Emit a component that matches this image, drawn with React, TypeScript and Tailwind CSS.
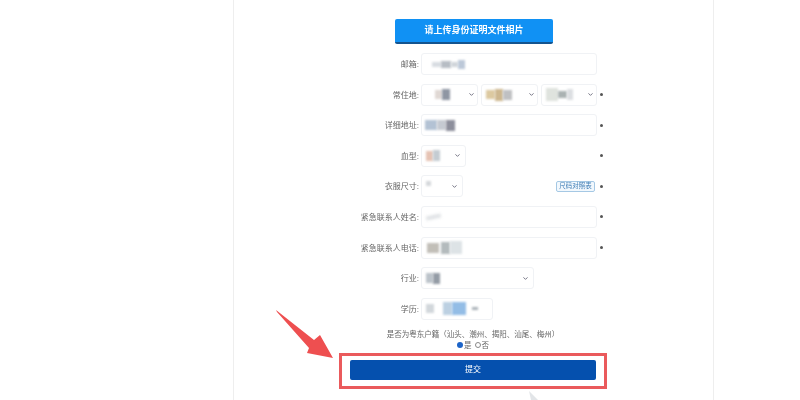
import { ReactNode } from "react";
import { ChevronDown } from "lucide-react";

function Row({
  label,
  star = true,
  children,
  extra,
}: {
  label: string;
  star?: boolean;
  children: ReactNode;
  extra?: ReactNode;
}) {
  return (
    <div className="flex h-[22px] items-center">
      <div className="w-[187px] pt-[2px] pr-[2px] text-right text-[8px] leading-none text-[#666] blur-[0.5px]">{label}:</div>
      <div className="flex w-[176px] items-center justify-between">
        {children}
        {extra}
      </div>
      {star && <span className="ml-[3px] h-[3px] w-[3px] rounded-full bg-[#555] blur-[0.3px]" />}
    </div>
  );
}

function Box({ className, children }: { className: string; children?: ReactNode }) {
  return (
    <div className={`flex h-[22px] items-center overflow-hidden rounded-[3px] border border-[#f0f2f5] bg-white px-[4px] ${className}`}>
      {children}
    </div>
  );
}

function Chevron({ near = false }: { near?: boolean }) {
  return (
    <ChevronDown
      className={near ? "-mr-[2px] ml-auto h-[7px] w-[7px] shrink-0 text-[#667] blur-[0.3px]" : "ml-auto h-[7px] w-[7px] shrink-0 text-[#667] blur-[0.3px]"}
      strokeWidth={3}
    />
  );
}

export default function App() {
  return (
    <main className="h-[400px] w-[800px] overflow-hidden bg-white font-['Liberation_Sans','Noto_Sans_CJK_SC',sans-serif]">
      <div className="relative ml-[233px] h-[400px] w-[481px] border-x border-[#eeeeee] pt-[19px]">
        <div className="ml-[161px] flex h-[25px] w-[158px] items-center justify-center rounded-[2px] border-b-2 border-[#14548f] bg-[#1091f4] text-[9px] font-bold text-white blur-[0.4px]">
          请上传身份证明文件相片
        </div>

        <div className="mt-[9px] flex flex-col gap-[8.6px]">
          <Row label="邮箱" star={false}>
            <Box className="w-[176px]">
              <div className="ml-[6px] h-[5px] w-[9px] bg-[#d8dce2] blur-[1px]" />
              <div className="h-[7px] w-[10px] bg-[#b7bdc4] blur-[1px]" />
              <div className="h-[5px] w-[7px] bg-[#d0d5da] blur-[1px]" />
              <div className="h-[9px] w-[7px] bg-[#bcc8d8] blur-[1px]" />
            </Box>
          </Row>
          <Row label="常住地">
            <Box className="w-[57px]">
              <div className="ml-[9px] h-[9px] w-[7px] bg-[#e0d8d4] blur-[1px]" />
              <div className="h-[11px] w-[8px] bg-[#8f96a3] blur-[1.2px]" />
              <Chevron near />
            </Box>
            <Box className="w-[57px]">
              <div className="h-[9px] w-[9px] bg-[#dcc9a0] blur-[1px]" />
              <div className="h-[12px] w-[8px] bg-[#cdb78f] blur-[1px]" />
              <div className="h-[10px] w-[9px] bg-[#bfc0c2] blur-[1px]" />
              <Chevron near />
            </Box>
            <Box className="w-[56px]">
              <div className="h-[13px] w-[12px] bg-[#dfe3de] blur-[1px]" />
              <div className="h-[7px] w-[9px] bg-[#aab2b2] blur-[1px]" />
              <div className="h-[11px] w-[6px] bg-[#dcdfe2] blur-[1px]" />
              <Chevron near />
            </Box>
          </Row>
          <Row label="详细地址">
            <Box className="w-[176px]">
              <div className="-ml-[1px] h-[10px] w-[12px] bg-[#b3c2d4] blur-[1px]" />
              <div className="h-[10px] w-[9px] bg-[#c5cad2] blur-[1px]" />
              <div className="h-[11px] w-[9px] bg-[#8d8f9c] blur-[1px]" />
            </Box>
          </Row>
          <Row label="血型">
            <Box className="w-[45px]">
              <div className="h-[10px] w-[7px] bg-[#e6c3b4] blur-[1px]" />
              <div className="h-[11px] w-[7px] bg-[#c4ccd2] blur-[1px]" />
              <Chevron />
            </Box>
          </Row>
          <Row
            label="衣服尺寸"
            extra={
              <div className="mr-[2px] flex h-[11px] w-[39px] items-center justify-center rounded-[2px] border border-[#a5c8e4] bg-[#f2f8fd] text-[6.5px] leading-none whitespace-nowrap text-[#3f7db5] blur-[0.4px]">
                尺码对照表
              </div>
            }
          >
            <Box className="w-[42px]">
              <div className="-mt-[5px] h-[5px] w-[5px] bg-[#d5d8db] blur-[1px]" />
              <Chevron />
            </Box>
          </Row>
          <Row label="紧急联系人姓名">
            <Box className="w-[176px]">
              <div className="h-[4px] w-[15px] -rotate-12 bg-[#dfe2e5] blur-[1.5px]" />
            </Box>
          </Row>
          <Row label="紧急联系人电话">
            <Box className="w-[176px]">
              <div className="ml-[1px] h-[10px] w-[12px] bg-[#c2bfb8] blur-[1px]" />
              <div className="ml-[2px] h-[12px] w-[9px] bg-[#b4bbbd] blur-[1px]" />
              <div className="h-[13px] w-[12px] bg-[#dde3e6] blur-[1px]" />
            </Box>
          </Row>
          <Row label="行业" star={false}>
            <Box className="w-[113px]">
              <div className="h-[10px] w-[7px] bg-[#bcc3ca] blur-[0.8px]" />
              <div className="h-[11px] w-[7px] bg-[#949ca6] blur-[0.8px]" />
              <Chevron />
            </Box>
          </Row>
          <Row label="学历" star={false}>
            <Box className="w-[72px]">
              <div className="h-[9px] w-[8px] bg-[#d2d7db] blur-[1px]" />
              <div className="ml-[9px] h-[13px] w-[9px] bg-[#bcd0e2] blur-[1px]" />
              <div className="h-[13px] w-[14px] bg-[#93bde6] blur-[1.2px]" />
              <div className="ml-[6px] h-[3px] w-[6px] bg-[#aab2b8] blur-[0.8px]" />
            </Box>
          </Row>
        </div>

        <div className="mt-[9px] ml-[105px] w-[268px] text-center text-[7.5px] leading-[11px] whitespace-nowrap text-[#666] blur-[0.5px]">
          <div>是否为粤东户籍（汕头、潮州、揭阳、汕尾、梅州）</div>
          <div className="flex items-center justify-center gap-[1px]">
            <span className="h-[6px] w-[6px] rounded-full bg-[#1c64c8]" />
            <span>是</span>
            <span className="ml-[2px] h-[6px] w-[6px] rounded-full border border-[#888]" />
            <span>否</span>
          </div>
        </div>

        <div className="mt-[2.5px] ml-[105px] flex h-[36px] w-[268px] items-center justify-center border-[3px] border-[#ea5a5c] pb-[2px] blur-[0.4px]">
          <div className="flex h-[20px] w-[246px] items-center justify-center rounded-[2px] bg-[#0550ae] text-[8px] text-white">
            提交
          </div>
        </div>

        <svg className="absolute top-[308px] left-[42px] h-[52px] w-[60px] blur-[0.4px]" viewBox="0 0 60 52">
          <path d="M0 2 L1 4 L33 40 L31 45 L57 50 L44 27 L38 32 Z" fill="#ee4f50" />
        </svg>
        <svg className="absolute top-[391px] left-[294px] h-[9px] w-[11px] blur-[0.5px]" viewBox="0 0 11 9">
          <path d="M1 0 L10 9 L3 9 Z" fill="#e2e5e8" />
        </svg>
      </div>
    </main>
  );
}
